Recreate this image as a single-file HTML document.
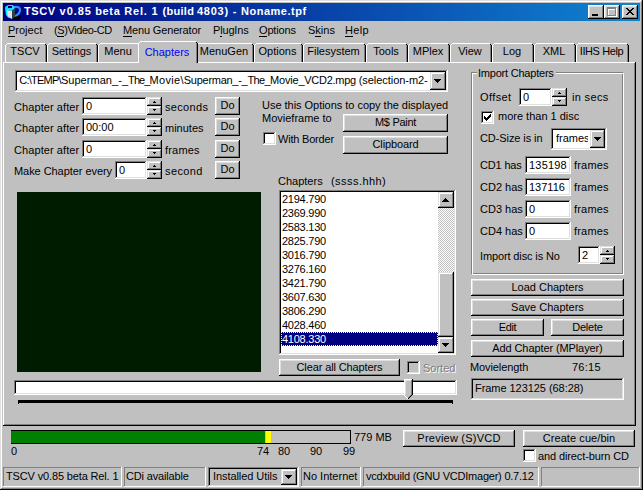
<!DOCTYPE html>
<html><head><meta charset="utf-8"><style>
html,body{margin:0;padding:0}
body{width:643px;height:490px;overflow:hidden;position:relative;background:#c0c0c0;font-family:"Liberation Sans",sans-serif}
.a{position:absolute;box-sizing:border-box}
.t{position:absolute;font:11px/13px "Liberation Sans",sans-serif;white-space:nowrap;color:#000}
.btn{background:#c0c0c0;box-shadow:inset -1px -1px #000,inset 1px 1px #fff,inset -2px -2px #808080,inset 2px 2px #dfdfdf}
.sbtn{background:#c0c0c0;box-shadow:inset -1px -1px #000,inset 1px 1px #dfdfdf,inset -2px -2px #808080,inset 2px 2px #fff}
.snk{box-shadow:inset -1px -1px #fff,inset 1px 1px #808080,inset -2px -2px #dfdfdf,inset 2px 2px #000}
.thin{box-shadow:inset -1px -1px #fff,inset 1px 1px #808080}
u{text-decoration:none;border-bottom:1px solid #000}
</style></head><body>

<div class="a " style="left:0px;top:0px;width:643px;height:490px;box-shadow:inset -1px -1px #000,inset 1px 1px #dfdfdf,inset -2px -2px #808080,inset 2px 2px #fff"></div>
<div class="a " style="left:3px;top:3px;width:637px;height:18px;background:linear-gradient(90deg,#000080,#1084d0)"></div>
<svg class="a" style="left:3px;top:3px" width="20" height="18" viewBox="0 0 20 18">
<path d="M10 11 L17 11 L18 14 L16 17 L10 17 Z" fill="#000"/>
<path d="M11 4 Q17 3 17 7 Q17 11 12 13" fill="none" stroke="#2a8cff" stroke-width="2.2"/>
<path d="M2 4 L5 2 L10 2 L12 5 L9 8 L3 7 Z" fill="#10e0ff"/>
<path d="M5 3 L9 3 L9 5 L5 5 Z" fill="#000060"/>
<path d="M2 5 L5 7 L5 14 L3 12 Z" fill="#00f0ff"/>
<path d="M4 7 L9 8 L9 16 L5 14 Z" fill="#e8e0e0"/>
<path d="M9 8 L12 6 L12 14 L9 16 Z" fill="#304040"/>
<path d="M4 11 L6 14 L5 15 Z" fill="#30ffff"/>
</svg>
<div class="t" style="left:23.90px;top:5px;color:#fff;font-weight:bold;letter-spacing:0.661px">TSCV </div>
<div class="t" style="left:59.60px;top:5px;color:#fff;font-weight:bold;letter-spacing:0.920px">v0.85 </div>
<div class="t" style="left:95.20px;top:5px;color:#fff;font-weight:bold;letter-spacing:0.665px">beta </div>
<div class="t" style="left:124.20px;top:5px;color:#fff;font-weight:bold;letter-spacing:0.814px">Rel. </div>
<div class="t" style="left:151.50px;top:5px;color:#fff;font-weight:bold;letter-spacing:0.663px">1 </div>
<div class="t" style="left:162.50px;top:5px;color:#fff;font-weight:bold;letter-spacing:0.287px">(build </div>
<div class="t" style="left:197.00px;top:5px;color:#fff;font-weight:bold;letter-spacing:0.752px">4803) </div>
<div class="t" style="left:232.70px;top:5px;color:#fff;font-weight:bold;letter-spacing:0.841px">- </div>
<div class="t" style="left:241.10px;top:5px;color:#fff;font-weight:bold;letter-spacing:0.500px">Noname.tpf</div>
<div class="a btn" style="left:588px;top:5px;width:16px;height:14px;"></div>
<div class="a btn" style="left:604px;top:5px;width:16px;height:14px;"></div>
<div class="a btn" style="left:622px;top:5px;width:16px;height:14px;"></div>
<div class="a " style="left:592px;top:14px;width:6px;height:2px;background:#000"></div>
<div class="a " style="left:608px;top:8px;width:9px;height:9px;border:1px solid #fff;border-top-width:2px"></div>
<div class="a " style="left:607px;top:7px;width:9px;height:9px;border:1px solid #808080;border-top-width:2px"></div>
<div class="a" style="left:626px;top:8px;width:2px;height:1px;background:#000"></div>
<div class="a" style="left:632px;top:8px;width:2px;height:1px;background:#000"></div>
<div class="a" style="left:627px;top:9px;width:2px;height:1px;background:#000"></div>
<div class="a" style="left:631px;top:9px;width:2px;height:1px;background:#000"></div>
<div class="a" style="left:628px;top:10px;width:2px;height:1px;background:#000"></div>
<div class="a" style="left:630px;top:10px;width:2px;height:1px;background:#000"></div>
<div class="a" style="left:629px;top:11px;width:2px;height:1px;background:#000"></div>
<div class="a" style="left:629px;top:11px;width:2px;height:1px;background:#000"></div>
<div class="a" style="left:628px;top:12px;width:2px;height:1px;background:#000"></div>
<div class="a" style="left:630px;top:12px;width:2px;height:1px;background:#000"></div>
<div class="a" style="left:627px;top:13px;width:2px;height:1px;background:#000"></div>
<div class="a" style="left:631px;top:13px;width:2px;height:1px;background:#000"></div>
<div class="a" style="left:626px;top:14px;width:2px;height:1px;background:#000"></div>
<div class="a" style="left:632px;top:14px;width:2px;height:1px;background:#000"></div>
<div class="t" style="left:8px;top:24px;"><u>P</u>roject</div>
<div class="t" style="left:54px;top:24px;letter-spacing:-0.4px;">(<u>S</u>)Video-CD</div>
<div class="t" style="left:123px;top:24px;letter-spacing:-0.154px;"><u>M</u>enu Generator</div>
<div class="t" style="left:213px;top:24px;letter-spacing:-0.167px;">P<u>l</u>ugIns</div>
<div class="t" style="left:259px;top:24px;letter-spacing:-0.167px;"><u>O</u>ptions</div>
<div class="t" style="left:308px;top:24px;">S<u>k</u>ins</div>
<div class="t" style="left:345px;top:24px;letter-spacing:0.333px;"><u>H</u>elp</div>
<div class="a" style="left:5px;top:43px;width:42px;height:19px;background:#c0c0c0"></div>
<div class="a" style="left:5px;top:45px;width:1px;height:17px;background:#fff"></div>
<div class="a" style="left:6px;top:44px;width:1px;height:1px;background:#fff"></div>
<div class="a" style="left:7px;top:43px;width:38px;height:1px;background:#fff"></div>
<div class="a" style="left:45px;top:44px;width:1px;height:1px;background:#000"></div>
<div class="a" style="left:46px;top:45px;width:1px;height:17px;background:#000"></div>
<div class="a" style="left:45px;top:45px;width:1px;height:17px;background:#808080"></div>
<div class="t" style="left:4px;top:45px;width:42px;text-align:center;color:#000;letter-spacing:0px">TSCV</div>
<div class="a" style="left:47px;top:43px;width:51px;height:19px;background:#c0c0c0"></div>
<div class="a" style="left:47px;top:45px;width:1px;height:17px;background:#fff"></div>
<div class="a" style="left:48px;top:44px;width:1px;height:1px;background:#fff"></div>
<div class="a" style="left:49px;top:43px;width:47px;height:1px;background:#fff"></div>
<div class="a" style="left:96px;top:44px;width:1px;height:1px;background:#000"></div>
<div class="a" style="left:97px;top:45px;width:1px;height:17px;background:#000"></div>
<div class="a" style="left:96px;top:45px;width:1px;height:17px;background:#808080"></div>
<div class="t" style="left:46px;top:45px;width:51px;text-align:center;color:#000;letter-spacing:0px">Settings</div>
<div class="a" style="left:98px;top:43px;width:42px;height:19px;background:#c0c0c0"></div>
<div class="a" style="left:98px;top:45px;width:1px;height:17px;background:#fff"></div>
<div class="a" style="left:99px;top:44px;width:1px;height:1px;background:#fff"></div>
<div class="a" style="left:100px;top:43px;width:38px;height:1px;background:#fff"></div>
<div class="a" style="left:138px;top:44px;width:1px;height:1px;background:#000"></div>
<div class="a" style="left:139px;top:45px;width:1px;height:17px;background:#000"></div>
<div class="a" style="left:138px;top:45px;width:1px;height:17px;background:#808080"></div>
<div class="t" style="left:97px;top:45px;width:42px;text-align:center;color:#000;letter-spacing:0px">Menu</div>
<div class="a" style="left:196px;top:43px;width:58px;height:19px;background:#c0c0c0"></div>
<div class="a" style="left:196px;top:45px;width:1px;height:17px;background:#fff"></div>
<div class="a" style="left:197px;top:44px;width:1px;height:1px;background:#fff"></div>
<div class="a" style="left:198px;top:43px;width:54px;height:1px;background:#fff"></div>
<div class="a" style="left:252px;top:44px;width:1px;height:1px;background:#000"></div>
<div class="a" style="left:253px;top:45px;width:1px;height:17px;background:#000"></div>
<div class="a" style="left:252px;top:45px;width:1px;height:17px;background:#808080"></div>
<div class="t" style="left:195px;top:45px;width:58px;text-align:center;color:#000;letter-spacing:0px">MenuGen</div>
<div class="a" style="left:254px;top:43px;width:49px;height:19px;background:#c0c0c0"></div>
<div class="a" style="left:254px;top:45px;width:1px;height:17px;background:#fff"></div>
<div class="a" style="left:255px;top:44px;width:1px;height:1px;background:#fff"></div>
<div class="a" style="left:256px;top:43px;width:45px;height:1px;background:#fff"></div>
<div class="a" style="left:301px;top:44px;width:1px;height:1px;background:#000"></div>
<div class="a" style="left:302px;top:45px;width:1px;height:17px;background:#000"></div>
<div class="a" style="left:301px;top:45px;width:1px;height:17px;background:#808080"></div>
<div class="t" style="left:253px;top:45px;width:49px;text-align:center;color:#000;letter-spacing:0px">Options</div>
<div class="a" style="left:303px;top:43px;width:63px;height:19px;background:#c0c0c0"></div>
<div class="a" style="left:303px;top:45px;width:1px;height:17px;background:#fff"></div>
<div class="a" style="left:304px;top:44px;width:1px;height:1px;background:#fff"></div>
<div class="a" style="left:305px;top:43px;width:59px;height:1px;background:#fff"></div>
<div class="a" style="left:364px;top:44px;width:1px;height:1px;background:#000"></div>
<div class="a" style="left:365px;top:45px;width:1px;height:17px;background:#000"></div>
<div class="a" style="left:364px;top:45px;width:1px;height:17px;background:#808080"></div>
<div class="t" style="left:302px;top:45px;width:63px;text-align:center;color:#000;letter-spacing:0px">Filesystem</div>
<div class="a" style="left:366px;top:43px;width:42px;height:19px;background:#c0c0c0"></div>
<div class="a" style="left:366px;top:45px;width:1px;height:17px;background:#fff"></div>
<div class="a" style="left:367px;top:44px;width:1px;height:1px;background:#fff"></div>
<div class="a" style="left:368px;top:43px;width:38px;height:1px;background:#fff"></div>
<div class="a" style="left:406px;top:44px;width:1px;height:1px;background:#000"></div>
<div class="a" style="left:407px;top:45px;width:1px;height:17px;background:#000"></div>
<div class="a" style="left:406px;top:45px;width:1px;height:17px;background:#808080"></div>
<div class="t" style="left:365px;top:45px;width:42px;text-align:center;color:#000;letter-spacing:0px">Tools</div>
<div class="a" style="left:408px;top:43px;width:42px;height:19px;background:#c0c0c0"></div>
<div class="a" style="left:408px;top:45px;width:1px;height:17px;background:#fff"></div>
<div class="a" style="left:409px;top:44px;width:1px;height:1px;background:#fff"></div>
<div class="a" style="left:410px;top:43px;width:38px;height:1px;background:#fff"></div>
<div class="a" style="left:448px;top:44px;width:1px;height:1px;background:#000"></div>
<div class="a" style="left:449px;top:45px;width:1px;height:17px;background:#000"></div>
<div class="a" style="left:448px;top:45px;width:1px;height:17px;background:#808080"></div>
<div class="t" style="left:407px;top:45px;width:42px;text-align:center;color:#000;letter-spacing:0px">MPlex</div>
<div class="a" style="left:450px;top:43px;width:42px;height:19px;background:#c0c0c0"></div>
<div class="a" style="left:450px;top:45px;width:1px;height:17px;background:#fff"></div>
<div class="a" style="left:451px;top:44px;width:1px;height:1px;background:#fff"></div>
<div class="a" style="left:452px;top:43px;width:38px;height:1px;background:#fff"></div>
<div class="a" style="left:490px;top:44px;width:1px;height:1px;background:#000"></div>
<div class="a" style="left:491px;top:45px;width:1px;height:17px;background:#000"></div>
<div class="a" style="left:490px;top:45px;width:1px;height:17px;background:#808080"></div>
<div class="t" style="left:449px;top:45px;width:42px;text-align:center;color:#000;letter-spacing:0px">View</div>
<div class="a" style="left:492px;top:43px;width:42px;height:19px;background:#c0c0c0"></div>
<div class="a" style="left:492px;top:45px;width:1px;height:17px;background:#fff"></div>
<div class="a" style="left:493px;top:44px;width:1px;height:1px;background:#fff"></div>
<div class="a" style="left:494px;top:43px;width:38px;height:1px;background:#fff"></div>
<div class="a" style="left:532px;top:44px;width:1px;height:1px;background:#000"></div>
<div class="a" style="left:533px;top:45px;width:1px;height:17px;background:#000"></div>
<div class="a" style="left:532px;top:45px;width:1px;height:17px;background:#808080"></div>
<div class="t" style="left:491px;top:45px;width:42px;text-align:center;color:#000;letter-spacing:0px">Log</div>
<div class="a" style="left:534px;top:43px;width:42px;height:19px;background:#c0c0c0"></div>
<div class="a" style="left:534px;top:45px;width:1px;height:17px;background:#fff"></div>
<div class="a" style="left:535px;top:44px;width:1px;height:1px;background:#fff"></div>
<div class="a" style="left:536px;top:43px;width:38px;height:1px;background:#fff"></div>
<div class="a" style="left:574px;top:44px;width:1px;height:1px;background:#000"></div>
<div class="a" style="left:575px;top:45px;width:1px;height:17px;background:#000"></div>
<div class="a" style="left:574px;top:45px;width:1px;height:17px;background:#808080"></div>
<div class="t" style="left:533px;top:45px;width:42px;text-align:center;color:#000;letter-spacing:0px">XML</div>
<div class="a" style="left:576px;top:43px;width:53px;height:19px;background:#c0c0c0"></div>
<div class="a" style="left:576px;top:45px;width:1px;height:17px;background:#fff"></div>
<div class="a" style="left:577px;top:44px;width:1px;height:1px;background:#fff"></div>
<div class="a" style="left:578px;top:43px;width:49px;height:1px;background:#fff"></div>
<div class="a" style="left:627px;top:44px;width:1px;height:1px;background:#000"></div>
<div class="a" style="left:628px;top:45px;width:1px;height:17px;background:#000"></div>
<div class="a" style="left:627px;top:45px;width:1px;height:17px;background:#808080"></div>
<div class="t" style="left:575px;top:45px;width:53px;text-align:center;color:#000;letter-spacing:-0.4px">IIHS Help</div>
<div class="a " style="left:3px;top:62px;width:633px;height:364px;box-shadow:inset -1px -1px #000,inset 1px 1px #fff,inset -2px -2px #808080"></div>
<div class="a" style="left:138px;top:41px;width:60px;height:22px;background:#c0c0c0"></div>
<div class="a" style="left:138px;top:43px;width:1px;height:20px;background:#fff"></div>
<div class="a" style="left:139px;top:42px;width:1px;height:1px;background:#fff"></div>
<div class="a" style="left:140px;top:41px;width:56px;height:1px;background:#fff"></div>
<div class="a" style="left:196px;top:42px;width:1px;height:1px;background:#000"></div>
<div class="a" style="left:197px;top:43px;width:1px;height:20px;background:#000"></div>
<div class="a" style="left:196px;top:43px;width:1px;height:20px;background:#808080"></div>
<div class="t" style="left:137px;top:46px;width:60px;text-align:center;color:#0000ff;letter-spacing:0px">Chapters</div>
<div class="a " style="left:139px;top:62px;width:57px;height:1px;background:#c0c0c0"></div>
<div class="a snk" style="left:15px;top:70px;width:433px;height:22px;background:#fff;"></div>
<div class="a" style="left:17px;top:72px;width:412px;height:18px;overflow:hidden">
<div class="t" style="left:2.30px;top:2px;letter-spacing:-0.758px">C:\TEMP\</div>
<div class="t" style="left:43.90px;top:2px;letter-spacing:0.050px">Superman_-_</div>
<div class="t" style="left:111.10px;top:2px;letter-spacing:-0.918px">The_</div>
<div class="t" style="left:132.50px;top:2px;letter-spacing:0.317px">Movie\</div>
<div class="t" style="left:166.80px;top:2px;letter-spacing:-0.277px">Superman_-_</div>
<div class="t" style="left:230.40px;top:2px;letter-spacing:-0.618px">The_</div>
<div class="t" style="left:253.00px;top:2px;letter-spacing:-0.193px">Movie_</div>
<div class="t" style="left:287.30px;top:2px;letter-spacing:-0.273px">VCD2.mpg </div>
<div class="t" style="left:341.70px;top:2px;letter-spacing:-0.050px">(selection-m2-</div>
</div>
<div class="a sbtn" style="left:430px;top:72px;width:16px;height:18px;"></div>
<div class="a" style="left:434px;top:79px;width:7px;height:1px;background:#000"></div>
<div class="a" style="left:435px;top:80px;width:5px;height:1px;background:#000"></div>
<div class="a" style="left:436px;top:81px;width:3px;height:1px;background:#000"></div>
<div class="a" style="left:437px;top:82px;width:1px;height:1px;background:#000"></div>
<div class="t" style="left:14px;top:101px;letter-spacing:0.083px;">Chapter after</div>
<div class="a snk" style="left:82px;top:97px;width:65px;height:18px;background:#fff;"></div>
<div class="t" style="left:86px;top:100px;">0</div>
<div class="a sbtn" style="left:147px;top:97px;width:15px;height:9px;"></div>
<div class="a sbtn" style="left:147px;top:106px;width:15px;height:9px;"></div>
<div class="a" style="left:153px;top:102px;width:3px;height:1px;background:#000"></div>
<div class="a" style="left:154px;top:101px;width:1px;height:1px;background:#000"></div>
<div class="a" style="left:153px;top:109px;width:3px;height:1px;background:#000"></div>
<div class="a" style="left:154px;top:110px;width:1px;height:1px;background:#000"></div>
<div class="t" style="left:165px;top:101px;letter-spacing:0.333px;">seconds</div>
<div class="a btn" style="left:215px;top:97px;width:25px;height:18px;"></div>
<div class="t" style="left:215px;top:99px;width:25px;text-align:center;">Do</div>
<div class="t" style="left:14px;top:122px;letter-spacing:0.083px;">Chapter after</div>
<div class="a snk" style="left:82px;top:118px;width:65px;height:18px;background:#fff;"></div>
<div class="t" style="left:86px;top:121px;">00:00</div>
<div class="a sbtn" style="left:147px;top:118px;width:15px;height:9px;"></div>
<div class="a sbtn" style="left:147px;top:127px;width:15px;height:9px;"></div>
<div class="a" style="left:153px;top:123px;width:3px;height:1px;background:#000"></div>
<div class="a" style="left:154px;top:122px;width:1px;height:1px;background:#000"></div>
<div class="a" style="left:153px;top:130px;width:3px;height:1px;background:#000"></div>
<div class="a" style="left:154px;top:131px;width:1px;height:1px;background:#000"></div>
<div class="t" style="left:165px;top:122px;">minutes</div>
<div class="a btn" style="left:215px;top:118px;width:25px;height:18px;"></div>
<div class="t" style="left:215px;top:120px;width:25px;text-align:center;">Do</div>
<div class="t" style="left:14px;top:144px;letter-spacing:0.083px;">Chapter after</div>
<div class="a snk" style="left:82px;top:140px;width:65px;height:18px;background:#fff;"></div>
<div class="t" style="left:86px;top:143px;">0</div>
<div class="a sbtn" style="left:147px;top:140px;width:15px;height:9px;"></div>
<div class="a sbtn" style="left:147px;top:149px;width:15px;height:9px;"></div>
<div class="a" style="left:153px;top:145px;width:3px;height:1px;background:#000"></div>
<div class="a" style="left:154px;top:144px;width:1px;height:1px;background:#000"></div>
<div class="a" style="left:153px;top:152px;width:3px;height:1px;background:#000"></div>
<div class="a" style="left:154px;top:153px;width:1px;height:1px;background:#000"></div>
<div class="t" style="left:165px;top:144px;letter-spacing:0.2px;">frames</div>
<div class="a btn" style="left:215px;top:140px;width:25px;height:18px;"></div>
<div class="t" style="left:215px;top:142px;width:25px;text-align:center;">Do</div>
<div class="t" style="left:14px;top:165px;letter-spacing:-0.059px;">Make Chapter every</div>
<div class="a snk" style="left:115px;top:161px;width:32px;height:18px;background:#fff;"></div>
<div class="t" style="left:119px;top:164px;">0</div>
<div class="a sbtn" style="left:147px;top:161px;width:15px;height:9px;"></div>
<div class="a sbtn" style="left:147px;top:170px;width:15px;height:9px;"></div>
<div class="a" style="left:153px;top:166px;width:3px;height:1px;background:#000"></div>
<div class="a" style="left:154px;top:165px;width:1px;height:1px;background:#000"></div>
<div class="a" style="left:153px;top:173px;width:3px;height:1px;background:#000"></div>
<div class="a" style="left:154px;top:174px;width:1px;height:1px;background:#000"></div>
<div class="t" style="left:165px;top:165px;letter-spacing:0.4px;">second</div>
<div class="a btn" style="left:215px;top:161px;width:25px;height:18px;"></div>
<div class="t" style="left:215px;top:163px;width:25px;text-align:center;">Do</div>
<div class="t" style="left:262px;top:99px;letter-spacing:-0.027px;">Use this Options to copy the displayed</div>
<div class="t" style="left:262px;top:112px;">Movieframe to</div>
<div class="a snk" style="left:263px;top:132px;width:13px;height:13px;background:#fff"></div>
<div class="t" style="left:278px;top:133px;letter-spacing:-0.2px;">With Border</div>
<div class="a btn" style="left:343px;top:114px;width:105px;height:18px;"></div>
<div class="t" style="left:343px;top:116px;width:105px;text-align:center;letter-spacing:-0.286px;">M$ Paint</div>
<div class="a btn" style="left:343px;top:136px;width:105px;height:18px;"></div>
<div class="t" style="left:343px;top:138px;width:105px;text-align:center;letter-spacing:-0.125px;">Clipboard</div>
<div class="t" style="left:278px;top:175px;">Chapters</div>
<div class="t" style="left:331px;top:175px;letter-spacing:0.444px;">(ssss.hhh)</div>
<div class="a " style="left:17px;top:192px;width:244px;height:180px;background:#001c00"></div>
<div class="a snk" style="left:279px;top:190px;width:177px;height:165px;background:#fff;"></div>
<div class="a" style="left:281px;top:192px;width:157px;height:161px;overflow:hidden">
<div class="t" style="left:1px;top:1px;letter-spacing:-0.25px">2194.790</div>
<div class="t" style="left:1px;top:15px;letter-spacing:-0.25px">2369.990</div>
<div class="t" style="left:1px;top:29px;letter-spacing:-0.25px">2583.130</div>
<div class="t" style="left:1px;top:43px;letter-spacing:-0.25px">2825.790</div>
<div class="t" style="left:1px;top:57px;letter-spacing:-0.25px">3016.790</div>
<div class="t" style="left:1px;top:71px;letter-spacing:-0.25px">3276.160</div>
<div class="t" style="left:1px;top:85px;letter-spacing:-0.25px">3421.790</div>
<div class="t" style="left:1px;top:99px;letter-spacing:-0.25px">3607.630</div>
<div class="t" style="left:1px;top:113px;letter-spacing:-0.25px">3806.290</div>
<div class="t" style="left:1px;top:127px;letter-spacing:-0.25px">4028.460</div>
<div class="a" style="left:0px;top:140px;width:157px;height:14px;background:#000080"></div>
<div class="a" style="left:0px;top:140px;width:157px;height:14px;background:repeating-linear-gradient(90deg,#ffff80 0 1px,transparent 1px 2px) 0 0/100% 1px no-repeat,repeating-linear-gradient(90deg,#ffff80 0 1px,transparent 1px 2px) 0 100%/100% 1px no-repeat,repeating-linear-gradient(180deg,#ffff80 0 1px,transparent 1px 2px) 0 0/1px 100% no-repeat,repeating-linear-gradient(180deg,#ffff80 0 1px,transparent 1px 2px) 100% 0/1px 100% no-repeat"></div>
<div class="t" style="left:1px;top:141px;color:#fff;letter-spacing:-0.25px">4108.330</div>
</div>
<div class="a " style="left:438px;top:208px;width:16px;height:64px;background:repeating-conic-gradient(#fff 0 25%,#c0c0c0 0 50%) 0 0/2px 2px"></div>
<div class="a sbtn" style="left:438px;top:192px;width:16px;height:16px;"></div>
<div class="a" style="left:442px;top:201px;width:7px;height:1px;background:#000"></div>
<div class="a" style="left:443px;top:200px;width:5px;height:1px;background:#000"></div>
<div class="a" style="left:444px;top:199px;width:3px;height:1px;background:#000"></div>
<div class="a" style="left:445px;top:198px;width:1px;height:1px;background:#000"></div>
<div class="a sbtn" style="left:438px;top:272px;width:16px;height:65px;"></div>
<div class="a sbtn" style="left:438px;top:337px;width:16px;height:16px;"></div>
<div class="a" style="left:442px;top:343px;width:7px;height:1px;background:#000"></div>
<div class="a" style="left:443px;top:344px;width:5px;height:1px;background:#000"></div>
<div class="a" style="left:444px;top:345px;width:3px;height:1px;background:#000"></div>
<div class="a" style="left:445px;top:346px;width:1px;height:1px;background:#000"></div>
<div class="a btn" style="left:279px;top:359px;width:121px;height:17px;"></div>
<div class="t" style="left:279px;top:361px;width:121px;text-align:center;letter-spacing:-0.118px;">Clear all Chapters</div>
<div class="a snk" style="left:407px;top:361px;width:13px;height:13px;background:#c0c0c0"></div>
<div class="t" style="left:424px;top:363px;color:#fff">Sorted</div>
<div class="t" style="left:423px;top:362px;color:#808080">Sorted</div>
<div class="a snk" style="left:14px;top:380px;width:443px;height:15px;background:#fff;"></div>
<div class="a " style="left:18px;top:400px;width:435px;height:3px;background:#000"></div>
<div class="a " style="left:18px;top:403px;width:1px;height:1px;background:#000"></div>
<div class="a " style="left:452px;top:403px;width:1px;height:1px;background:#000"></div>
<svg class="a" style="left:404px;top:379px" width="9" height="20" shape-rendering="crispEdges">
<path d="M0 0H9V15L4.5 19.5L0 15Z" fill="#c0c0c0"/>
<path d="M0 0H8V1H1V15H0Z" fill="#fff"/>
<path d="M1 1H7V2H2V15H1Z" fill="#dfdfdf"/>
<rect x="8" y="0" width="1" height="16" fill="#000"/>
<rect x="7" y="1" width="1" height="15" fill="#808080"/>
<rect x="7" y="16" width="1" height="1" fill="#000"/><rect x="6" y="17" width="1" height="1" fill="#000"/><rect x="5" y="18" width="1" height="1" fill="#000"/><rect x="4" y="19" width="1" height="1" fill="#000"/>
<rect x="6" y="16" width="1" height="1" fill="#808080"/><rect x="5" y="17" width="1" height="1" fill="#808080"/><rect x="4" y="18" width="1" height="1" fill="#808080"/>
<rect x="0" y="16" width="1" height="1" fill="#fff"/><rect x="1" y="17" width="1" height="1" fill="#fff"/><rect x="2" y="18" width="1" height="1" fill="#fff"/><rect x="3" y="19" width="1" height="1" fill="#fff"/>
</svg>
<div class="a " style="left:471px;top:72px;width:152px;height:202px;border:1px solid #808080"></div>
<div class="a " style="left:472px;top:73px;width:152px;height:202px;border:1px solid #fff"></div>
<div class="t" style="left:477px;top:67px;background:#c0c0c0;padding:0 2px 0 1px;letter-spacing:-0.214px">Import Chapters</div>
<div class="t" style="left:480px;top:91px;letter-spacing:0.4px;">Offset</div>
<div class="a snk" style="left:519px;top:88px;width:33px;height:18px;background:#fff;"></div>
<div class="t" style="left:523px;top:91px;">0</div>
<div class="a sbtn" style="left:552px;top:88px;width:15px;height:9px;"></div>
<div class="a sbtn" style="left:552px;top:97px;width:15px;height:9px;"></div>
<div class="a" style="left:558px;top:93px;width:3px;height:1px;background:#000"></div>
<div class="a" style="left:559px;top:92px;width:1px;height:1px;background:#000"></div>
<div class="a" style="left:558px;top:100px;width:3px;height:1px;background:#000"></div>
<div class="a" style="left:559px;top:101px;width:1px;height:1px;background:#000"></div>
<div class="t" style="left:572px;top:91px;letter-spacing:0.333px;">in secs</div>
<div class="a snk" style="left:481px;top:111px;width:13px;height:13px;background:#fff"></div>
<div class="a" style="left:490px;top:114px;width:1px;height:1px;background:#000"></div>
<div class="a" style="left:489px;top:115px;width:1px;height:1px;background:#000"></div>
<div class="a" style="left:490px;top:115px;width:1px;height:1px;background:#000"></div>
<div class="a" style="left:484px;top:116px;width:1px;height:1px;background:#000"></div>
<div class="a" style="left:488px;top:116px;width:1px;height:1px;background:#000"></div>
<div class="a" style="left:489px;top:116px;width:1px;height:1px;background:#000"></div>
<div class="a" style="left:490px;top:116px;width:1px;height:1px;background:#000"></div>
<div class="a" style="left:484px;top:117px;width:1px;height:1px;background:#000"></div>
<div class="a" style="left:485px;top:117px;width:1px;height:1px;background:#000"></div>
<div class="a" style="left:487px;top:117px;width:1px;height:1px;background:#000"></div>
<div class="a" style="left:488px;top:117px;width:1px;height:1px;background:#000"></div>
<div class="a" style="left:489px;top:117px;width:1px;height:1px;background:#000"></div>
<div class="a" style="left:484px;top:118px;width:1px;height:1px;background:#000"></div>
<div class="a" style="left:485px;top:118px;width:1px;height:1px;background:#000"></div>
<div class="a" style="left:486px;top:118px;width:1px;height:1px;background:#000"></div>
<div class="a" style="left:487px;top:118px;width:1px;height:1px;background:#000"></div>
<div class="a" style="left:488px;top:118px;width:1px;height:1px;background:#000"></div>
<div class="a" style="left:485px;top:119px;width:1px;height:1px;background:#000"></div>
<div class="a" style="left:486px;top:119px;width:1px;height:1px;background:#000"></div>
<div class="a" style="left:487px;top:119px;width:1px;height:1px;background:#000"></div>
<div class="a" style="left:486px;top:120px;width:1px;height:1px;background:#000"></div>
<div class="t" style="left:498px;top:110px;">more than 1 disc</div>
<div class="t" style="left:480px;top:132px;letter-spacing:-0.083px;">CD-Size is in</div>
<div class="a snk" style="left:551px;top:128px;width:56px;height:22px;background:#fff;"></div>
<div class="a" style="left:553px;top:130px;width:35px;height:18px;overflow:hidden"><div class="t" style="left:3px;top:2px">frames</div></div>
<div class="a sbtn" style="left:590px;top:130px;width:15px;height:18px;"></div>
<div class="a" style="left:594px;top:137px;width:7px;height:1px;background:#000"></div>
<div class="a" style="left:595px;top:138px;width:5px;height:1px;background:#000"></div>
<div class="a" style="left:596px;top:139px;width:3px;height:1px;background:#000"></div>
<div class="a" style="left:597px;top:140px;width:1px;height:1px;background:#000"></div>
<div class="t" style="left:480px;top:159px;letter-spacing:-0.167px;">CD1 has</div>
<div class="a snk" style="left:525px;top:156px;width:46px;height:18px;background:#fff;"></div>
<div class="t" style="left:529px;top:159px;letter-spacing:0.2px;">135198</div>
<div class="t" style="left:574px;top:159px;letter-spacing:0.2px;">frames</div>
<div class="t" style="left:480px;top:181px;">CD2 has</div>
<div class="a snk" style="left:525px;top:178px;width:46px;height:18px;background:#fff;"></div>
<div class="t" style="left:529px;top:181px;">137116</div>
<div class="t" style="left:574px;top:181px;letter-spacing:0.2px;">frames</div>
<div class="t" style="left:480px;top:203px;">CD3 has</div>
<div class="a snk" style="left:525px;top:200px;width:46px;height:18px;background:#fff;"></div>
<div class="t" style="left:529px;top:203px;">0</div>
<div class="t" style="left:574px;top:203px;letter-spacing:0.2px;">frames</div>
<div class="t" style="left:480px;top:225px;">CD4 has</div>
<div class="a snk" style="left:525px;top:222px;width:46px;height:18px;background:#fff;"></div>
<div class="t" style="left:529px;top:225px;">0</div>
<div class="t" style="left:574px;top:225px;letter-spacing:0.2px;">frames</div>
<div class="t" style="left:480px;top:250px;letter-spacing:-0.125px;">Import disc is No</div>
<div class="a snk" style="left:578px;top:246px;width:22px;height:18px;background:#fff;"></div>
<div class="t" style="left:582px;top:249px;">2</div>
<div class="a sbtn" style="left:600px;top:246px;width:15px;height:9px;"></div>
<div class="a sbtn" style="left:600px;top:255px;width:15px;height:9px;"></div>
<div class="a" style="left:606px;top:251px;width:3px;height:1px;background:#000"></div>
<div class="a" style="left:607px;top:250px;width:1px;height:1px;background:#000"></div>
<div class="a" style="left:606px;top:258px;width:3px;height:1px;background:#000"></div>
<div class="a" style="left:607px;top:259px;width:1px;height:1px;background:#000"></div>
<div class="a btn" style="left:471px;top:279px;width:153px;height:17px;"></div>
<div class="t" style="left:471px;top:281px;width:153px;text-align:center;">Load Chapters</div>
<div class="a btn" style="left:471px;top:299px;width:153px;height:17px;"></div>
<div class="t" style="left:471px;top:301px;width:153px;text-align:center;">Save Chapters</div>
<div class="a btn" style="left:471px;top:319px;width:73px;height:17px;"></div>
<div class="t" style="left:471px;top:321px;width:73px;text-align:center;letter-spacing:-0.333px;">Edit</div>
<div class="a btn" style="left:551px;top:319px;width:73px;height:17px;"></div>
<div class="t" style="left:551px;top:321px;width:73px;text-align:center;letter-spacing:-0.2px;">Delete</div>
<div class="a btn" style="left:471px;top:340px;width:153px;height:17px;"></div>
<div class="t" style="left:471px;top:342px;width:153px;text-align:center;letter-spacing:-0.1px;">Add Chapter (MPlayer)</div>
<div class="t" style="left:470px;top:361px;letter-spacing:-0.1px;">Movielength</div>
<div class="t" style="left:572px;top:361px;letter-spacing:0.25px;">76:15</div>
<div class="a snk" style="left:471px;top:378px;width:153px;height:22px;background:#c0c0c0;"></div>
<div class="t" style="left:475px;top:382px;letter-spacing:-0.053px;">Frame 123125 (68:28)</div>
<div class="a " style="left:11px;top:430px;width:340px;height:14px;background:#c0c0c0;border-top:1px solid #000;border-bottom:1px solid #000;border-right:1px solid #000"></div>
<div class="a " style="left:11px;top:431px;width:254px;height:12px;background:#008000"></div>
<div class="a " style="left:266px;top:431px;width:5px;height:12px;background:#ffff00"></div>
<div class="t" style="left:354px;top:431px;">779 MB</div>
<div class="t" style="left:11px;top:445px;">0</div>
<div class="t" style="left:257px;top:445px;">74</div>
<div class="t" style="left:278px;top:445px;">80</div>
<div class="t" style="left:310px;top:445px;">90</div>
<div class="t" style="left:343px;top:445px;">99</div>
<div class="a btn" style="left:403px;top:430px;width:112px;height:17px;"></div>
<div class="t" style="left:403px;top:432px;width:112px;text-align:center;letter-spacing:0.231px;">Preview (S)VCD</div>
<div class="a btn" style="left:523px;top:430px;width:112px;height:17px;"></div>
<div class="t" style="left:523px;top:432px;width:112px;text-align:center;letter-spacing:0.077px;">Create cue/bin</div>
<div class="a snk" style="left:523px;top:449px;width:13px;height:13px;background:#fff"></div>
<div class="t" style="left:538px;top:450px;letter-spacing:-0.118px;">and direct-burn CD</div>
<div class="a thin" style="left:3px;top:467px;width:119px;height:20px;"></div>
<div class="t" style="left:6px;top:470px;letter-spacing:-0.143px;">TSCV v0.85 beta Rel. 1</div>
<div class="a thin" style="left:124px;top:467px;width:82px;height:20px;"></div>
<div class="t" style="left:126px;top:470px;letter-spacing:-0.167px;">CDi available</div>
<div class="a thin" style="left:301px;top:467px;width:60px;height:20px;"></div>
<div class="t" style="left:303px;top:470px;">No Internet</div>
<div class="a thin" style="left:363px;top:467px;width:176px;height:20px;"></div>
<div class="t" style="left:366px;top:470px;letter-spacing:-0.226px;">vcdxbuild (GNU VCDImager) 0.7.12</div>
<div class="a thin" style="left:541px;top:467px;width:99px;height:20px;"></div>
<div class="a snk" style="left:208px;top:467px;width:91px;height:20px;background:#c0c0c0;"></div>
<div class="t" style="left:213px;top:470px;letter-spacing:-0.071px;">Installed Utils</div>
<div class="a sbtn" style="left:281px;top:469px;width:16px;height:16px;"></div>
<div class="a" style="left:285px;top:475px;width:7px;height:1px;background:#000"></div>
<div class="a" style="left:286px;top:476px;width:5px;height:1px;background:#000"></div>
<div class="a" style="left:287px;top:477px;width:3px;height:1px;background:#000"></div>
<div class="a" style="left:288px;top:478px;width:1px;height:1px;background:#000"></div>
</body></html>
